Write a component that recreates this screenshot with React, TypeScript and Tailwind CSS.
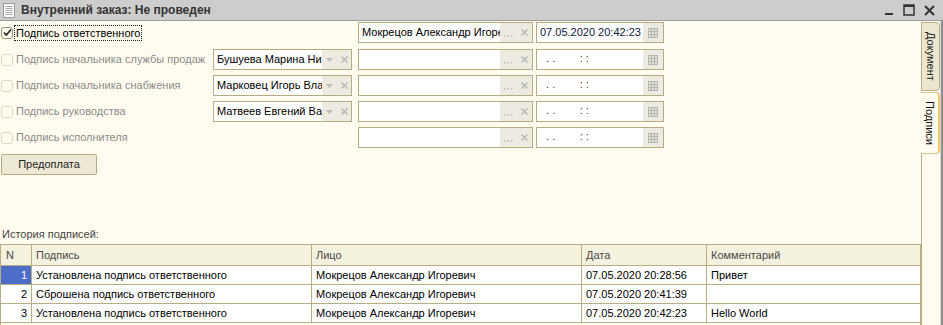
import type { ReactNode } from "react";

type SignRow = {
  label: string;
  checked: boolean;
  person?: string;
  signer: string;
  date: string;
};

const rows: SignRow[] = [
  { label: "Подпись ответственного", checked: true, signer: "Мокрецов Александр Игоревич", date: "07.05.2020 20:42:23" },
  { label: "Подпись начальника службы продаж", checked: false, person: "Бушуева Марина Николаевна", signer: "", date: "" },
  { label: "Подпись начальника снабжения", checked: false, person: "Марковец Игорь Владимирович", signer: "", date: "" },
  { label: "Подпись руководства", checked: false, person: "Матвеев Евгений Валерьевич", signer: "", date: "" },
  { label: "Подпись исполнителя", checked: false, signer: "", date: "" },
];

const history = [
  { n: 1, text: "Установлена подпись ответственного", person: "Мокрецов Александр Игоревич", date: "07.05.2020 20:28:56", comment: "Привет" },
  { n: 2, text: "Сброшена подпись ответственного", person: "Мокрецов Александр Игоревич", date: "07.05.2020 20:41:39", comment: "" },
  { n: 3, text: "Установлена подпись ответственного", person: "Мокрецов Александр Игоревич", date: "07.05.2020 20:42:23", comment: "Hello World" },
];

const Checkbox = ({ checked }: { checked: boolean }) => (
  <div
    className={`flex h-[12px] w-[12px] shrink-0 items-center justify-center rounded-[3px] border bg-[#fffbef] ${
      checked ? "border-[#9d9577]" : "border-[#e0d9c3]"
    }`}
  >
    {checked && (
      <svg width="9" height="9" viewBox="0 0 9 9">
        <path d="M1 4.5 L3.3 7 L8 1.5" fill="none" stroke="#222" strokeWidth="1.6" />
      </svg>
    )}
  </div>
);

const FieldButton = ({ children, w }: { children: ReactNode; w: string }) => (
  <div className={`flex h-full shrink-0 items-center justify-center bg-[#edeae1] ${w}`}>{children}</div>
);

const Dots = () => (
  <svg width="9" height="8" viewBox="0 0 9 8">
    <rect x="0" y="6" width="1.5" height="1.5" fill="#bcbcbc" />
    <rect x="3.5" y="6" width="1.5" height="1.5" fill="#bcbcbc" />
    <rect x="7" y="6" width="1.5" height="1.5" fill="#bcbcbc" />
  </svg>
);

const Cross = () => (
  <svg width="7" height="7" viewBox="0 0 7 7">
    <path d="M0.5 0.5 L6.5 6.5 M6.5 0.5 L0.5 6.5" stroke="#b3b3b3" strokeWidth="1.2" />
  </svg>
);

const Down = () => (
  <svg width="7" height="4" viewBox="0 0 7 4">
    <path d="M0 0 H7 L3.5 4 Z" fill="#bdbdbd" />
  </svg>
);

const Calendar = () => (
  <svg width="10" height="10" viewBox="0 0 10 10">
    <rect x="0.5" y="0.5" width="9" height="9" fill="#e4e1d8" stroke="#b6b6b0" />
    <path d="M0.5 3.5 H9.5 M0.5 6.5 H9.5 M3.5 0.5 V9.5 M6.5 0.5 V9.5" stroke="#b6b6b0" />
  </svg>
);

const App = () => {
  return (
    <div className="flex h-[325px] w-[943px] flex-col overflow-hidden bg-[#fffbef] font-['Liberation_Sans',Arial,sans-serif] text-[11px] text-black">
      {/* title bar */}
      <div className="flex h-[21px] shrink-0 items-center border-b border-[#9c9c9c] bg-[#cdcdcd]">
        <svg className="ml-[3px]" width="12" height="15" viewBox="0 0 12 15">
          <rect x="0.5" y="0.5" width="11" height="14" fill="#fafafa" stroke="#9a9a9a" />
          <path d="M2.5 3.5 H9.5 M2.5 5.5 H9.5 M2.5 7.5 H9.5 M2.5 9.5 H9.5 M2.5 11.5 H9.5" stroke="#a8a8a8" />
        </svg>
        <span className="ml-[6px] text-[12px] font-bold text-[#333333]">Внутренний заказ: Не проведен</span>
        <div className="ml-auto flex items-center gap-[9px] pr-[8px]">
          <svg width="10" height="12" viewBox="0 0 10 12">
            <rect x="1" y="9" width="8" height="2" fill="#333" />
          </svg>
          <svg width="12" height="12" viewBox="0 0 12 12">
            <rect x="1" y="1" width="10" height="10" fill="none" stroke="#333" strokeWidth="1.5" />
            <rect x="1" y="1" width="10" height="2" fill="#333" />
          </svg>
          <svg width="11" height="11" viewBox="0 0 11 11">
            <path d="M1 1 L10 10 M10 1 L1 10" stroke="#333" strokeWidth="2" />
          </svg>
        </div>
      </div>

      <div className="flex min-h-0 flex-1">
        {/* main page */}
        <div className="flex w-[921px] shrink-0 flex-col pt-[1px]">
          <div className="flex flex-col gap-[5px]">
            {rows.map((row, i) => (
              <div key={row.label} className={`flex h-[21px] items-center ${i === 1 ? "mt-[1px]" : ""}`}>
                <div className="flex w-[213px] shrink-0 items-center whitespace-nowrap pl-[1px]">
                  <Checkbox checked={row.checked} />
                  {row.checked ? (
                    <span className="ml-[1px] border border-dotted border-[#222] px-[1px] leading-[14px]">{row.label}</span>
                  ) : (
                    <span className="ml-[3px] text-[#8c8c8c]">{row.label}</span>
                  )}
                </div>
                <div className="w-[145px] shrink-0">
                  {row.person && (
                    <div className="flex h-[21px] w-[139px] border border-[#b6ac82] bg-white">
                      <div className="flex-1 overflow-hidden whitespace-nowrap pl-[3px] leading-[19px]">{row.person}</div>
                      <FieldButton w="w-[15px]">
                        <Down />
                      </FieldButton>
                      <FieldButton w="w-[14px]">
                        <Cross />
                      </FieldButton>
                    </div>
                  )}
                </div>
                <div className="flex h-[21px] w-[175px] shrink-0 border border-[#b6ac82] bg-white">
                  <div className="flex-1 overflow-hidden whitespace-nowrap pl-[3px] leading-[19px]">{row.signer}</div>
                  <FieldButton w="w-[16px]">
                    <Dots />
                  </FieldButton>
                  <FieldButton w="w-[16px]">
                    <Cross />
                  </FieldButton>
                </div>
                <div className="ml-[3px] flex h-[21px] w-[128px] shrink-0 border border-[#b6ac82] bg-white">
                  {row.date ? (
                    <div className="flex-1 whitespace-nowrap pl-[3px] leading-[19px] text-[#0b1a3a]">{row.date}</div>
                  ) : (
                    <div className="flex-1 whitespace-pre pl-[3px] leading-[17px] text-[#4a2a5a]">{"  . .        : :"}</div>
                  )}
                  <FieldButton w="w-[20px]">
                    <Calendar />
                  </FieldButton>
                </div>
              </div>
            ))}
          </div>

          <button className="ml-[1px] mt-[6px] h-[21px] w-[96px] rounded-[2px] border border-[#b5ab83] bg-[#eee9d6] text-[11px] text-[#222]">
            Предоплата
          </button>

          <div className="mt-[52px] pl-[2px] leading-[15px] text-[#444]">История подписей:</div>

          <div className="mt-[2px] flex min-h-0 flex-1 flex-col border-x border-t border-[#b7ae86]">
            <div className="flex h-[21px] shrink-0 border-b border-[#b7ae86] bg-[#f4f1de] text-[#4a4a4a]">
              <div className="w-[31px] shrink-0 border-r border-[#b7ae86] pl-[5px] leading-[20px]">N</div>
              <div className="w-[280px] shrink-0 border-r border-[#b7ae86] pl-[4px] leading-[20px]">Подпись</div>
              <div className="w-[270px] shrink-0 border-r border-[#b7ae86] pl-[4px] leading-[20px]">Лицо</div>
              <div className="w-[125px] shrink-0 border-r border-[#b7ae86] pl-[4px] leading-[20px]">Дата</div>
              <div className="flex-1 pl-[4px] leading-[20px]">Комментарий</div>
            </div>
            {history.map((h) => (
              <div key={h.n} className="flex h-[19px] shrink-0 border-b border-[#b7ae86] bg-white">
                <div
                  className={`w-[31px] shrink-0 border-r border-[#b7ae86] pr-[4px] text-right leading-[18px] ${
                    h.n === 1 ? "bg-[#4d6dc8] text-white" : ""
                  }`}
                >
                  {h.n}
                </div>
                <div className="w-[280px] shrink-0 border-r border-[#b7ae86] pl-[4px] leading-[18px]">{h.text}</div>
                <div className="w-[270px] shrink-0 border-r border-[#b7ae86] pl-[4px] leading-[18px]">{h.person}</div>
                <div className="w-[125px] shrink-0 border-r border-[#b7ae86] pl-[4px] leading-[18px]">{h.date}</div>
                <div className="flex-1 pl-[4px] leading-[18px]">{h.comment}</div>
              </div>
            ))}
          </div>
        </div>

        {/* vertical tabs */}
        <div className="flex w-[19px] shrink-0 flex-col pt-[1px]">
          <div className="flex h-[69px] shrink-0 items-center justify-center rounded-r-[4px] border border-[#b8ae8a] bg-[#ece6cf]">
            <span className="text-[11px] text-[#222] [writing-mode:vertical-rl]">Документ</span>
          </div>
          <div className="mt-[1px] flex h-[62px] shrink-0 items-center justify-center rounded-r-[4px] border-y border-r-2 border-y-[#cfc49a] border-r-[#f1c66e] bg-[#fffbef]">
            <span className="text-[11px] text-[#111] [writing-mode:vertical-rl]">Подписи</span>
          </div>
          <div className="flex-1 border-l border-[#b8ae8a]" />
        </div>
        <div className="w-[1px] shrink-0 bg-[#d8d8d8]" />
        <div className="w-[2px] shrink-0 bg-[#8e8e8e]" />
      </div>
    </div>
  );
};

export default App;
